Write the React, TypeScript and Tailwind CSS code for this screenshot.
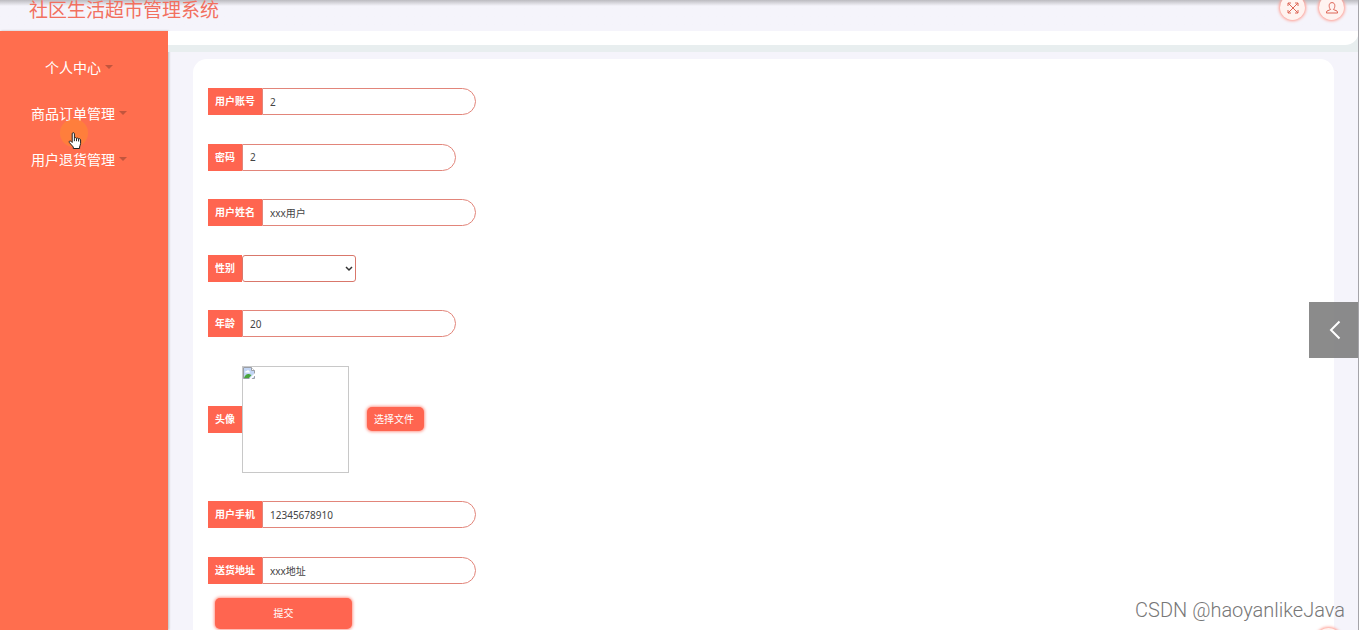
import React, { useState } from 'react';

type Field = { id: string; label: string; value: string };

const menus = ['个人中心', '商品订单管理', '用户退货管理'];

const topFields: Field[] = [
  { id: 'account', label: '用户账号', value: '2' },
  { id: 'password', label: '密码', value: '2' },
  { id: 'name', label: '用户姓名', value: 'xxx用户' },
];

const bottomFields: Field[] = [
  { id: 'phone', label: '用户手机', value: '12345678910' },
  { id: 'address', label: '送货地址', value: 'xxx地址' },
];

const FieldLabel: React.FC<{ htmlFor: string; children: React.ReactNode }> = ({ htmlFor, children }) => (
  <label htmlFor={htmlFor} className="h-[27px] shrink-0 bg-[#ff6550] px-[7px] text-[10px] leading-[27px] font-bold text-white">
    {children}
  </label>
);

const TextField: React.FC<{ field: Field }> = ({ field }) => {
  const [value, setValue] = useState(field.value);
  return (
    <div className="flex">
      <FieldLabel htmlFor={field.id}>{field.label}</FieldLabel>
      <input
        id={field.id}
        value={value}
        onChange={e => setValue(e.target.value)}
        className="h-[27px] w-[214px] rounded-r-full border border-[#e2857a] bg-white px-[7px] text-[10px] text-[#444] outline-none"
      />
    </div>
  );
};

const FullscreenIcon = () => (
  <svg width="12" height="12" viewBox="0 0 12 12" fill="none" stroke="#dd6657" strokeWidth="1">
    <path d="M1 4V1h3M8 1h3v3M11 8v3H8M4 11H1V8M1 1l10 10M11 1L1 11" />
  </svg>
);

const UserIcon = () => (
  <svg width="12" height="12" viewBox="0 0 12 12" fill="none" stroke="#dd6657" strokeWidth="1">
    <path d="M4.600 7.500C3.400 6.300 3.200 5 3.200 3.500 3.200 1.700 4.300.6 6 .6s2.800 1.100 2.800 2.900c0 1.500-.2 2.800-1.400 4L11 9c.5.500.6 1.200.6 2H.4c0-.8.1-1.500.6-2z" />
  </svg>
);

const BrokenImage = () => (
  <svg width="12" height="12" viewBox="0 0 12 12" role="img" aria-label="头像">
    <path d="M.5.500h8l3 3v8H.5z" fill="#c3d6f5" stroke="#9a9ea5" />
    <path d="M2 5.500c0-1 .8-1.500 1.600-1.500.6-1.200 2.400-1 2.700.5H7v1z" fill="#fff" />
    <path d="M1 11c1-3 3-4.500 5-4l2.500 1L6 11z" fill="#4aa53c" />
    <path d="M8.500.500v3h3" fill="#fff" stroke="#9a9ea5" />
    <path d="M6 12l6-6v2.500L8.500 12z" fill="#fff" />
  </svg>
);

const HandCursor = () => (
  <svg width="14" height="18" viewBox="0 0 14 18" fill="#fff" stroke="#222" strokeWidth="1" strokeLinejoin="round">
    <path d="M4.200 10.500V1.800c0-1.500 2.200-1.500 2.200 0v4.400c.4-.9 2-.7 2.100.3.500-.7 2-.5 2.100.5.7-.6 2-.2 2 .9v3.600c0 1.500-1 2.300-1 3.500v1.500H5.300V15L1.400 10.600c-.9-1.200.6-2.200 1.500-1.400z" />
    <path d="M6.400 6.200v3M8.500 6.500v2.700M10.600 7v2.500" />
  </svg>
);

const App: React.FC = () => {
  const [gender, setGender] = useState('');

  return (
    <div className="relative flex h-screen flex-col overflow-hidden bg-[#f5f4fb] font-['Noto_Sans','Noto_Sans_CJK_SC',sans-serif]">
      <header className="flex h-[31px] shrink-0 items-start justify-between bg-linear-to-b from-[#bcbbc0] to-[#f5f4fb] to-[6px] pr-[15px] pl-[29px]">
        <h1 className="text-[19px] leading-[20px] text-[#f2705f]">社区生活超市管理系统</h1>
        <div className="-mt-[5px] flex gap-[14px]">
          <button aria-label="全屏" className="flex size-[25px] items-center justify-center rounded-full bg-[#fff3f0] shadow-[0_0_3px_1px_#ff9c90]">
            <FullscreenIcon />
          </button>
          <button aria-label="用户" className="flex size-[25px] items-center justify-center rounded-full bg-[#fff3f0] shadow-[0_0_3px_1px_#ff9c90]">
            <UserIcon />
          </button>
        </div>
      </header>

      <div className="flex min-h-0 flex-1">
        <nav className="w-[168px] shrink-0 bg-[#ff6e4e] pt-[13px] shadow-[1px_0_2px_#bbb]">
          {menus.map(m => (
            <a key={m} href="#" className="flex h-[46px] items-center justify-center gap-1 pr-[10px] text-[14px] text-white">
              {m}
              <span className="border-x-4 border-t-4 border-x-transparent border-t-[#c2553d]" />
            </a>
          ))}
        </nav>

        <main className="min-w-0 flex-1">
          <div className="bg-[#e8eeef] pb-[7px]">
            <div className="h-[14px] rounded-br-[14px] bg-white" />
          </div>
          <section className="mx-[25px] mt-[7px] min-h-full rounded-[14px] bg-white pt-[29px] pl-[15px]">
            <form onSubmit={e => e.preventDefault()}>
              <div className="flex h-[496px] flex-col justify-between">
                {topFields.map(f => <TextField key={f.id} field={f} />)}

                <div className="flex">
                  <FieldLabel htmlFor="gender">性别</FieldLabel>
                  <div className="relative flex">
                    <select
                      id="gender"
                      value={gender}
                      onChange={e => setGender(e.target.value)}
                      className="h-[27px] w-[114px] appearance-none rounded-[3px] border border-[#d9776b] bg-white px-[7px] text-[10px] text-[#444] outline-none"
                    >
                      <option value=""></option>
                      <option value="男">男</option>
                      <option value="女">女</option>
                    </select>
                    <svg className="pointer-events-none absolute top-[11px] right-[3px]" width="8" height="6" viewBox="0 0 8 6" fill="none" stroke="#333" strokeWidth="1.5">
                      <path d="M1 1l3 3 3-3" />
                    </svg>
                  </div>
                </div>

                <TextField field={{ id: 'age', label: '年龄', value: '20' }} />

                <div className="flex items-center">
                  <FieldLabel htmlFor="avatar">头像</FieldLabel>
                  <div className="size-[107px] border border-[#c8c8c8]">
                    <BrokenImage />
                  </div>
                  <button id="avatar" type="button" className="ml-[18px] h-6 rounded-[5px] bg-[#ff6550] pr-[10px] pl-[7px] text-[10px] text-white shadow-[0_0_3px_1px_#ff9c90]">
                    选择文件
                  </button>
                </div>

                {bottomFields.map(f => <TextField key={f.id} field={f} />)}
              </div>
              <button type="submit" className="mt-[14px] ml-[7px] h-[31px] w-[137px] rounded-[5px] bg-[#ff6550] text-[10px] text-white shadow-[0_0_3px_1px_#ff9c90]">
                提交
              </button>
            </form>
          </section>
        </main>
      </div>

      {/* pointer with its click halo */}
      <div className="pointer-events-none absolute top-[119px] left-[60px] size-7 rounded-full bg-[#ff8c2e]/55" />
      <div className="pointer-events-none absolute top-[132px] left-[68px]">
        <HandCursor />
      </div>

      <button aria-label="展开" className="absolute top-[302px] right-0 flex h-14 w-[50px] items-center justify-center bg-[#777]/85 pl-[2px]">
        <svg width="12" height="20" viewBox="0 0 12 20" fill="none" stroke="#fff" strokeWidth="2">
          <path d="M10.500 1.500L2 10l8.500 8.500" />
        </svg>
      </button>
      <div className="absolute right-[17px] -bottom-[25px] size-[27px] rounded-full bg-[#fff3f0] shadow-[0_0_3px_1px_#ff9c90]" />
      <p className="absolute right-[14px] bottom-[8px] font-[Roboto,sans-serif] text-[20px] leading-6 font-light text-[#777]">CSDN @haoyanlikeJava</p>
      <div className="absolute inset-y-0 right-0 w-px bg-[#a5a4a9]" />
    </div>
  );
};

export default App;
